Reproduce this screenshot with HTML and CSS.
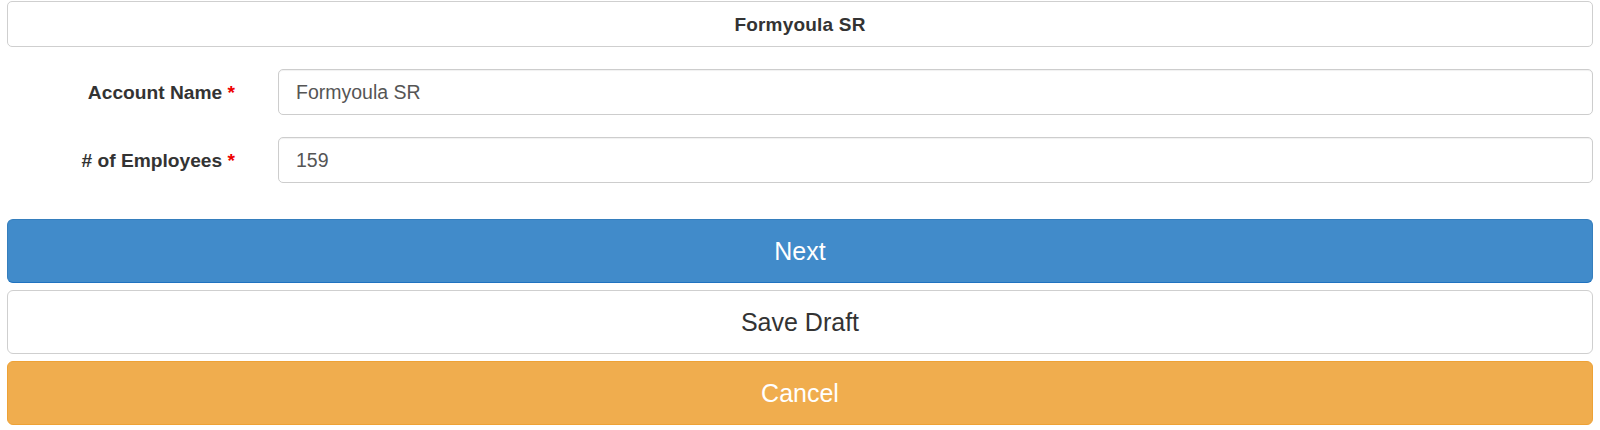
FILE: index.html
```html
<!DOCTYPE html>
<html>
<head>
<meta charset="utf-8">
<link rel="stylesheet" href="styles.css">
</head>
<body>
<div class="page">
  <div class="title-box">Formyoula SR</div>
  <div class="form">
    <div class="row">
      <label class="label">Account Name <span class="req">*</span></label>
      <div class="input">Formyoula SR</div>
    </div>
    <div class="row">
      <label class="label"># of Employees <span class="req">*</span></label>
      <div class="input">159</div>
    </div>
  </div>
  <div class="actions">
    <button class="btn btn-primary">Next</button>
    <button class="btn btn-default">Save Draft</button>
    <button class="btn btn-warning">Cancel</button>
  </div>
</div>
</body>
</html>
```

FILE: styles.css
```css
* { box-sizing: border-box; }
html, body { margin: 0; padding: 0; background: #fff; }
body { font-family: "Liberation Sans", Arial, sans-serif; color: #333; }
.page { padding: 1px 7px 0; }
.title-box {
  height: 46px;
  border: 1px solid #cfcfcf;
  border-radius: 5px;
  display: flex;
  align-items: center;
  justify-content: center;
  padding-top: 1px;
  font-size: 19px;
  letter-spacing: 0.2px;
  font-weight: bold;
  color: #333;
}
.form {
  margin-top: 22px;
  display: flex;
  flex-direction: column;
  gap: 22px;
}
.row {
  display: grid;
  grid-template-columns: 228px 1fr;
  column-gap: 43px;
  align-items: center;
}
.label {
  text-align: right;
  font-size: 19.2px;
  font-weight: bold;
  color: #333;
  white-space: nowrap;
  padding-top: 2px;
}
.req { color: #e00; }
.input {
  height: 46px;
  border: 1px solid #cdcdcd;
  border-radius: 5px;
  box-shadow: inset 0 1px 1px rgba(0,0,0,0.06);
  padding: 1px 16px 0 17px;
  display: flex;
  align-items: center;
  font-size: 19.5px;
  color: #555;
}
.actions {
  margin-top: 36px;
  display: flex;
  flex-direction: column;
  gap: 7px;
}
.btn {
  height: 64px;
  width: 100%;
  border-radius: 6px;
  font-family: "Liberation Sans", Arial, sans-serif;
  font-size: 25px;
  border: 1px solid transparent;
  padding: 0;
  cursor: pointer;
}
.btn-primary {
  background: #418bca;
  border-color: #357ebd;
  border-bottom-color: #1f72c0;
  color: #fff;
}
.btn-default {
  background: #fff;
  border-color: #cfcfcf;
  color: #333;
}
.btn-warning {
  background: #f0ad4e;
  border-color: #eea236;
  color: #fff;
}
```
